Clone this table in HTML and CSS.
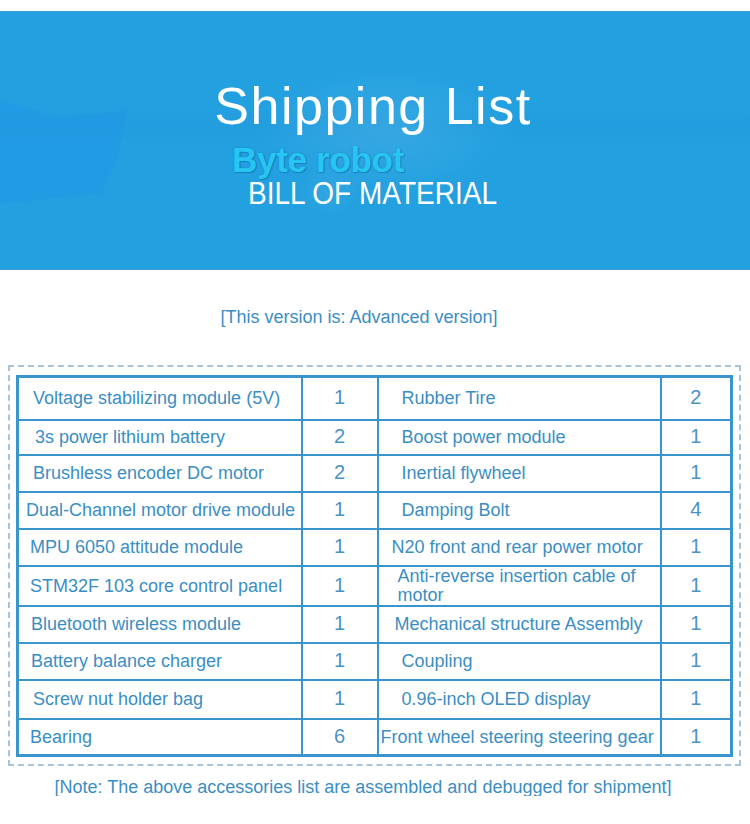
FILE: index.html
```html
<!DOCTYPE html>
<html lang="en">
<head>
<meta charset="utf-8">
<title>Shipping List</title>
<link rel="stylesheet" href="styles.css">
</head>
<body>
<header class="banner">
  <div class="banner-shape"></div>
  <h1 class="banner-title">Shipping List</h1>
  <div class="banner-brand">Byte robot</div>
  <div class="banner-sub">BILL OF MATERIAL</div>
</header>

<p class="version">[This version is: Advanced version]</p>

<div class="frame">
  <table class="bom">
    <colgroup>
      <col class="c-name1"><col class="c-qty1"><col class="c-name2"><col class="c-qty2">
    </colgroup>
    <tr class="r-tall">
      <td class="name">Voltage stabilizing module (5V)</td><td class="qty">1</td>
      <td class="name2">Rubber Tire</td><td class="qty">2</td>
    </tr>
    <tr class="r-short">
      <td class="name p-15">3s power lithium battery</td><td class="qty">2</td>
      <td class="name2">Boost power module</td><td class="qty">1</td>
    </tr>
    <tr>
      <td class="name">Brushless encoder DC motor</td><td class="qty">2</td>
      <td class="name2">Inertial flywheel</td><td class="qty">1</td>
    </tr>
    <tr>
      <td class="name p-7">Dual-Channel motor drive module</td><td class="qty">1</td>
      <td class="name2">Damping Bolt</td><td class="qty">4</td>
    </tr>
    <tr>
      <td class="name p-11">MPU 6050 attitude module</td><td class="qty">1</td>
      <td class="name2 p-13">N20 front and rear power motor</td><td class="qty">1</td>
    </tr>
    <tr>
      <td class="name p-11">STM32F 103 core control panel</td><td class="qty">1</td>
      <td class="name2 p-19 two-line">Anti-reverse insertion cable of<br>motor</td><td class="qty">1</td>
    </tr>
    <tr>
      <td class="name p-12">Bluetooth wireless module</td><td class="qty">1</td>
      <td class="name2 p-16">Mechanical structure Assembly</td><td class="qty">1</td>
    </tr>
    <tr>
      <td class="name p-12">Battery balance charger</td><td class="qty">1</td>
      <td class="name2">Coupling</td><td class="qty">1</td>
    </tr>
    <tr class="r-plus">
      <td class="name">Screw nut holder bag</td><td class="qty">1</td>
      <td class="name2">0.96-inch OLED display</td><td class="qty">1</td>
    </tr>
    <tr>
      <td class="name p-11">Bearing</td><td class="qty">6</td>
      <td class="name2 p-2">Front wheel steering steering gear</td><td class="qty">1</td>
    </tr>
  </table>
</div>

<p class="note">[Note: The above accessories list are assembled and debugged for shipment]</p>
</body>
</html>
```

FILE: styles.css
```css
html, body {
  margin: 0;
  padding: 0;
  background: #ffffff;
}

body {
  font-family: "Liberation Sans", Arial, sans-serif;
  color: #3b8ec4;
  width: 750px;
}

/* ---------- banner ---------- */
.banner {
  position: relative;
  margin-top: 11px;
  height: 259px;
  box-sizing: border-box;
  padding-top: 67px;
  overflow: hidden;
  display: flex;
  flex-direction: column;
  border-top: 1px solid #3c9bd3;
  border-bottom: 1px solid #3a9ad2;
  background:
    radial-gradient(ellipse 170px 90px at 385px 118px, rgba(255,255,255,0.09), rgba(255,255,255,0) 75%),
    radial-gradient(ellipse 50px 35px at 330px 180px, rgba(255,255,255,0.06), rgba(255,255,255,0) 70%),
    linear-gradient(180deg, rgba(0,0,0,0) 0, rgba(0,0,0,0) 98px, rgba(20,120,200,0.08) 112px, rgba(0,0,0,0) 130px),
    #23a0e0;
}

.banner-shape {
  position: absolute;
  left: 0;
  top: 88px;
  width: 130px;
  height: 108px;
  background: #1f94e6;
  opacity: 0.45;
  clip-path: polygon(0 0, 18% 6%, 45% 16%, 98% 10%, 90% 55%, 78% 86%, 0 96%);
}

.banner-title {
  position: relative;
  margin: 0;
  font-weight: normal;
  font-size: 52px;
  letter-spacing: 1.5px;
  line-height: 55px;
  color: #ffffff;
  text-align: center;
  padding-right: 4px;
}

.banner-brand {
  position: relative;
  margin: 8px 0 0 232px;
  font-weight: bold;
  font-size: 35px;
  line-height: 35px;
  letter-spacing: -0.3px;
  color: #27c5f2;
  text-shadow: 0 0 2px rgba(10, 80, 140, 0.35), 1px 1px 1px rgba(10, 70, 130, 0.3);
}

.banner-sub {
  position: relative;
  margin: 1px 0 0 248px;
  font-size: 32px;
  line-height: 30px;
  color: #ffffff;
  transform: scaleX(0.875);
  transform-origin: left center;
}

/* ---------- version / note ---------- */
.version {
  margin: 38px 0 0;
  font-size: 18px;
  line-height: 18px;
  text-align: center;
  padding-right: 32px;
}

.note {
  margin: 12px 0 0;
  font-size: 18px;
  line-height: 18px;
  text-align: center;
  padding-right: 24px;
}

/* ---------- table ---------- */
.frame {
  margin: 39px 0 0 8px;
  width: 733px;
  box-sizing: border-box;
  border: 2px dashed #a8c4da;
  padding: 8px 9px 7px 6px;
}

.bom {
  width: 714px;
  table-layout: fixed;
  border-collapse: collapse;
  border: 3px solid #3a95cc;
}

.c-name1 { width: 284px; }
.c-qty1 { width: 76px; }
.c-name2 { width: 283px; }
.c-qty2 { width: 71px; }

.bom tr { height: 37px; }
.bom tr.r-tall { height: 43px; }
.bom tr.r-short { height: 35px; }
.bom tr.r-plus { height: 39px; }

.bom td {
  border: 2px solid #3a95cc;
  padding: 0;
  vertical-align: middle;
  font-size: 18px;
  line-height: 20px;
  white-space: nowrap;
  overflow: hidden;
}

.bom td.name { padding-left: 14px; }
.bom td.name2 { padding-left: 23px; }

.bom td.p-2 { padding-left: 2px; }
.bom td.p-7 { padding-left: 7px; }
.bom td.p-11 { padding-left: 11px; }
.bom td.p-12 { padding-left: 12px; }
.bom td.p-13 { padding-left: 13px; }
.bom td.p-15 { padding-left: 16px; }
.bom td.p-16 { padding-left: 16px; }
.bom td.p-19 { padding-left: 19px; }

.bom td.two-line {
  line-height: 19px;
}

.bom td.qty {
  text-align: center;
  font-size: 20px;
  color: #4a93c5;
  padding-bottom: 2px;
}
```
